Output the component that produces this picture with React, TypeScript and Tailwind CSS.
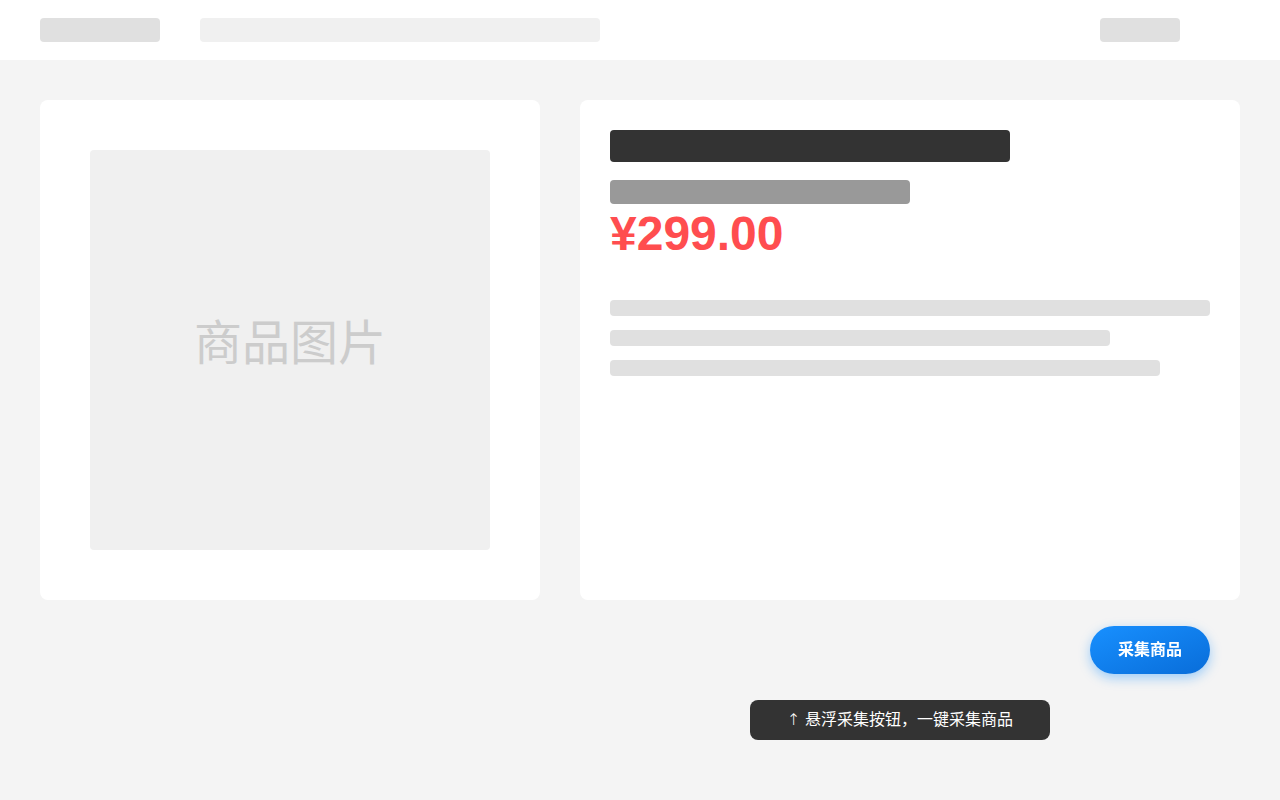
export default function App() {
  const lines = ["w-[600px]", "w-[500px]", "w-[550px]"]

  return (
    <div className="min-h-screen bg-[#f4f4f4] font-['Liberation_Sans','Noto_Sans_CJK_SC',sans-serif]">
      {/* Header */}
      <header className="h-[60px] bg-white flex items-center pl-10 pr-[100px]">
        <div className="w-[120px] h-6 rounded bg-[#e0e0e0]" />
        <div className="ml-10 w-[400px] h-6 rounded bg-[#f0f0f0]" />
        <div className="ml-auto w-20 h-6 rounded bg-[#e0e0e0]" />
      </header>

      {/* Main */}
      <main className="flex gap-10 p-10">
        <div className="w-[500px] h-[500px] bg-white rounded-lg p-[50px]">
          <div className="w-[400px] h-[400px] bg-[#f0f0f0] rounded flex items-center justify-center pb-3">
            <span className="text-[48px] text-[#cccccc]">商品图片</span>
          </div>
        </div>

        <div className="flex-1 h-[500px] bg-white rounded-lg p-[30px]">
          <div className="w-[400px] h-8 rounded bg-[#333333]" />
          <div className="mt-[18px] w-[300px] h-6 rounded bg-[#999999]" />
          <div className="mt-[2px] text-[48px] leading-[55px] font-bold text-[#ff4d4f]">¥299.00</div>
          <div className="mt-[39px] flex flex-col gap-[14px]">
            {lines.map((w, i) => (
              <div key={i} className={`${w} h-4 rounded-sm bg-[#e0e0e0]`} />
            ))}
          </div>
        </div>
      </main>

      {/* Floating collect button */}
      <button className="fixed left-[1090px] top-[626px] w-[120px] h-12 rounded-full bg-gradient-to-br from-[#1890ff] to-[#096dd9] text-white text-base font-bold shadow-[0_4px_12px_rgba(24,144,255,0.4)]">
        采集商品
      </button>

      {/* Hint */}
      <div className="fixed left-[750px] top-[700px] w-[300px] h-10 rounded-lg bg-[#333333] text-white text-base flex items-center justify-center">
        <span className="font-['DejaVu_Sans',sans-serif] font-light">↑</span>
        <span>&nbsp;悬浮采集按钮，一键采集商品</span>
      </div>
    </div>
  )
}
